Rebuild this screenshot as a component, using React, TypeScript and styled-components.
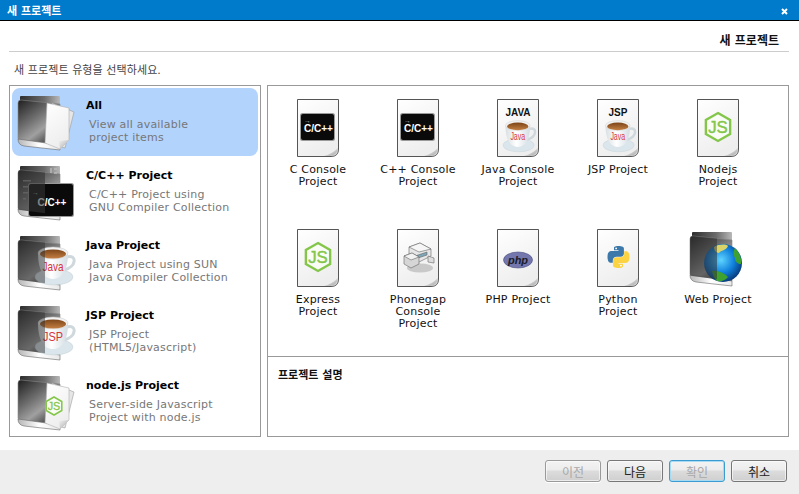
import React from 'react';
import styled, { createGlobalStyle } from 'styled-components';

const GlobalStyle = createGlobalStyle`
  html, body {
    margin: 0;
    padding: 0;
    background: #fff;
    font-family: 'DejaVu Sans', 'Noto Sans CJK KR', sans-serif;
    font-size: 11px;
  }
`;

const Dialog = styled.div`
  width: 799px;
  height: 494px;
  display: flex;
  flex-direction: column;
  overflow: hidden;
  background: #fff;
`;

const TitleBar = styled.div`
  height: 19px;
  flex: none;
  display: flex;
  align-items: center;
  justify-content: space-between;
  padding: 0 11px 1px 7px;
  background: #007acb;
  border-bottom: 1px solid #000;
  color: #fff;
  font-weight: bold;
  font-size: 11px;
`;

const CloseMark = styled.svg`
  width: 7px;
  height: 7px;
  margin-top: 3px;
`;

const Header = styled.div`
  height: 24px;
  flex: none;
  margin: 0 10px 0 9px;
  padding: 6px 10px 0 0;
  display: flex;
  align-items: center;
  justify-content: flex-end;
  border-bottom: 1px solid #cccccc;
  color: #111;
  font-size: 12px;
  font-weight: bold;
  box-sizing: content-box;
`;

const Hint = styled.div`
  height: 33px;
  flex: none;
  padding: 0 0 0 14px;
  display: flex;
  align-items: center;
  color: #444;
  font-size: 11px;
  letter-spacing: 0.08px;
`;

const Body = styled.div`
  display: flex;
  gap: 6px;
  height: 352px;
  flex: none;
  margin: 0 10px 0 9px;
`;

const TypeList = styled.div`
  width: 252px;
  flex: none;
  box-sizing: border-box;
  border: 1px solid #999;
  padding: 2px;
  display: flex;
  flex-direction: column;
  gap: 2px;
`;

const TypeRow = styled.div<{ $selected?: boolean }>`
  height: 68px;
  flex: none;
  display: flex;
  padding: 5px 0 0 4px;
  box-sizing: border-box;
  border-radius: 8px;
  background: ${(p) => (p.$selected ? '#b2d3fc' : 'transparent')};
`;

const TypeText = styled.div`
  margin-left: 10px;
  padding-top: 6px;
`;

const TypeTitle = styled.div`
  font-weight: bold;
  color: #000;
  line-height: 14px;
  height: 14px;
`;

const TypeDesc = styled.div`
  margin: 5px 0 0 3px;
  color: #777;
  line-height: 13px;
  letter-spacing: 0.2px;
  white-space: pre-line;
`;

const RightColumn = styled.div`
  flex: 1;
  box-sizing: border-box;
  border: 1px solid #999;
  display: flex;
  flex-direction: column;
`;

const TemplateGrid = styled.div`
  height: 271px;
  flex: none;
  box-sizing: border-box;
  border-bottom: 1px solid #999;
  padding-top: 13px;
  display: grid;
  grid-template-columns: repeat(5, 100px);
  grid-auto-rows: 130px;
`;

const TemplateCell = styled.div`
  display: flex;
  flex-direction: column;
  align-items: center;
`;

const TemplateIcon = styled.div`
  height: 58px;
  margin-bottom: 7px;
  display: flex;
  justify-content: center;
`;

const TemplateLabel = styled.div`
  text-align: center;
  line-height: 12px;
  color: #111;
  letter-spacing: 0.2px;
  white-space: pre-line;
`;

const Description = styled.div`
  padding: 12px 0 0 10px;
  font-weight: bold;
  color: #111;
  line-height: 14px;
`;

const Footer = styled.div`
  margin-top: 13px;
  height: 44px;
  flex: none;
  background: #eeeeee;
  display: flex;
  justify-content: flex-end;
  gap: 6px;
  padding: 10px 12px 0 0;
  box-sizing: border-box;
`;

const Button = styled.button<{ $focused?: boolean }>`
  width: 56px;
  height: 22px;
  padding: 0;
  box-sizing: border-box;
  font-family: inherit;
  font-size: 12px;
  color: #222;
  border: 1px solid #777;
  border-radius: 3px;
  background: linear-gradient(#f3f3f3 0%, #ececec 45%, #dcdcdc 50%, #cfcfcf 100%);
  box-shadow: inset 0 0 0 1px rgba(255, 255, 255, 0.6);

  &:disabled {
    color: #a8a8a8;
    border-color: ${(p) => (p.$focused ? '#3c9bd0' : '#9a9a9a')};
    box-shadow: ${(p) =>
      p.$focused ? 'inset 0 0 0 1px #a5dcf3' : 'inset 0 0 0 1px rgba(255,255,255,.6), 0 1px 0 #fff'};
  }
`;

const HiddenDefs = styled.svg`
  position: absolute;
  width: 0;
  height: 0;
`;

const iconFont = "'Liberation Sans', sans-serif";

const SharedDefs = () => (
  <HiddenDefs aria-hidden="true">
    <defs>
      <linearGradient id="folderBack" x1="0" y1="0" x2="1" y2="0">
        <stop offset="0" stopColor="#2e2e2e" />
        <stop offset="0.6" stopColor="#6a6a6a" />
        <stop offset="1" stopColor="#b8b8b8" />
      </linearGradient>
      <linearGradient id="folderFront" x1="0" y1="0" x2="0.7" y2="1">
        <stop offset="0" stopColor="#1e1e1e" />
        <stop offset="0.45" stopColor="#6f6f6f" />
        <stop offset="0.7" stopColor="#a0a0a0" />
        <stop offset="1" stopColor="#3a3a3a" />
      </linearGradient>
      <linearGradient id="folderLip" x1="0" y1="0" x2="1" y2="0">
        <stop offset="0" stopColor="#b5b5b5" />
        <stop offset="0.5" stopColor="#ffffff" />
        <stop offset="1" stopColor="#e8e8e8" />
      </linearGradient>
      <linearGradient id="pageFill" x1="0" y1="0" x2="0.4" y2="1">
        <stop offset="0" stopColor="#ffffff" />
        <stop offset="1" stopColor="#eeeeee" />
      </linearGradient>
      <linearGradient id="pageFold" x1="0" y1="0" x2="1" y2="1">
        <stop offset="0" stopColor="#f2f2f2" />
        <stop offset="1" stopColor="#a8a8a8" />
      </linearGradient>
      <linearGradient id="cupBody" x1="0" y1="0" x2="1" y2="0">
        <stop offset="0" stopColor="#d9dfe2" />
        <stop offset="0.45" stopColor="#ffffff" />
        <stop offset="1" stopColor="#d3dde3" />
      </linearGradient>
      <linearGradient id="coffee" x1="0" y1="0" x2="0" y2="1">
        <stop offset="0" stopColor="#7c4519" />
        <stop offset="1" stopColor="#c47f43" />
      </linearGradient>
      <radialGradient id="globe" cx="0.45" cy="0.42" r="0.62">
        <stop offset="0" stopColor="#5fd4ff" />
        <stop offset="0.55" stopColor="#0f80dc" />
        <stop offset="1" stopColor="#07316f" />
      </radialGradient>
      <clipPath id="folderLeft">
        <rect x="0" y="0" width="29" height="60" />
      </clipPath>
    </defs>
  </HiddenDefs>
);

const FRONT = 'M2 10 Q2 7 5 7 L44 11 V52 L4 47 Q2 47 2 45 Z';

const FolderBase = () => (
  <>
    <rect x="4" y="3" width="40" height="12" rx="1" fill="url(#folderBack)" />
    <path d={FRONT} fill="url(#folderFront)" stroke="#888" strokeWidth="0.6" />
    <path d="M2 46 L44 52 V57 L8 53 Q2 52 2 46 Z" fill="url(#folderLip)" stroke="#666" strokeWidth="0.6" />
  </>
);

// the left part of the folder lies over whatever sits in it
const FolderVeil = ({ opacity = 0.6 }: { opacity?: number }) => (
  <path d={FRONT} fill="#333" opacity={opacity} clipPath="url(#folderLeft)" />
);

const Terminal = ({ x, y, w, h }: { x: number; y: number; w: number; h: number }) => (
  <g>
    <rect x={x - 1} y={y - 1} width={w + 2} height={h + 2} rx="2.5" fill="#9a9a9a" />
    <rect x={x} y={y} width={w} height={h} rx="2" fill="#0a0a0a" />
    <text x={x + 3} y={y + h * 0.34} fill="#bbb" fontSize="7" fontFamily={iconFont}>
      →
    </text>
    <text
      x={x + w / 2 + 1}
      y={y + h * 0.68}
      fill="#fff"
      fontSize="10"
      fontWeight="bold"
      textAnchor="middle"
      fontFamily={iconFont}
    >
      C/C++
    </text>
  </g>
);

const Cup = ({ label, transform, textWidth }: { label: string; transform: string; textWidth: number }) => (
  <g transform={transform}>
    <ellipse cx="19" cy="32" rx="19" ry="8" fill="#dbe6ec" stroke="#c4d0d6" strokeWidth="0.5" />
    <path d="M32 12 C42 9 42 22 29 25" fill="none" stroke="#cfd8dd" strokeWidth="3" />
    <path d="M3 8 C3 24 8 34 18 34 C28 34 33 24 33 8 Z" fill="url(#cupBody)" />
    <ellipse cx="18" cy="8" rx="15" ry="6" fill="#f2f2f2" stroke="#c9c9c9" strokeWidth="0.5" />
    <ellipse cx="18" cy="9" rx="13" ry="4.6" fill="url(#coffee)" />
    <text
      x="18"
      y="26"
      fill="#d4343c"
      fontSize="13"
      textAnchor="middle"
      textLength={textWidth}
      lengthAdjust="spacingAndGlyphs"
      fontFamily={iconFont}
    >
      {label}
    </text>
  </g>
);

const JsHex = ({ cx, cy, r }: { cx: number; cy: number; r: number }) => {
  const pts = [0, 60, 120, 180, 240, 300]
    .map((a) => {
      const t = ((a - 90) * Math.PI) / 180;
      return `${cx + r * Math.cos(t)},${cy + r * Math.sin(t)}`;
    })
    .join(' ');
  return (
    <g>
      <polygon points={pts} fill="#fafdf6" stroke="#84c64a" strokeWidth={r * 0.17} />
      <text
        x={cx}
        y={cy + r * 0.42}
        fill="#84c64a"
        stroke="#84c64a"
        strokeWidth={r * 0.03}
        fontSize={r * 1.2}
        textAnchor="middle"
        fontFamily={iconFont}
      >
        JS
      </text>
    </g>
  );
};

const Sheets = () => (
  <g>
    <path d="M36 10 L58 19 L49 55 L30 50 Z" fill="#e6e6e6" stroke="#9a9a9a" strokeWidth="0.6" />
    <path d="M31 10 L53 15 L53 47 L44 56 L29 50 Z" fill="url(#pageFill)" stroke="#b0b0b0" strokeWidth="0.6" />
    <path d="M53 47 L44 56 L43 48 Z" fill="url(#pageFold)" />
  </g>
);

const Globe = () => (
  <g>
    <circle cx="35" cy="34" r="19" fill="url(#globe)" />
    <path d="M26 18 C31 15 38 15 40 17 C38 22 33 21 31 24 C28 24 26 21 26 18 Z" fill="#d9d36a" />
    <path d="M47 19 C51 23 54 29 53 35 C50 35 47 33 47 29 C45 26 45 22 47 19 Z" fill="#3fa12f" />
    <path d="M24 42 C29 41 36 44 40 48 C37 52 32 53 29 52 C26 49 25 46 24 42 Z" fill="#3fa12f" />
  </g>
);

type ListKind = 'all' | 'c' | 'java' | 'jsp' | 'node';

const ListIcon = ({ kind }: { kind: ListKind }) => (
  <svg width="60" height="60" viewBox="0 0 60 60">
    <FolderBase />
    {kind === 'all' && <Sheets />}
    {kind === 'c' && (
      <>
        <g fill="#bbb" opacity="0.7">
          <rect x="34" y="5" width="2" height="5" />
          <rect x="38" y="5" width="3" height="2" />
          <rect x="38" y="9" width="3" height="2" />
          <rect x="7" y="17" width="8" height="1.5" />
          <rect x="7" y="23" width="12" height="1.5" />
          <rect x="7" y="29" width="6" height="1.5" />
          <rect x="7" y="35" width="3" height="1.5" />
        </g>
        <Terminal x={13} y={21} w={44} h={32} />
        <FolderVeil />
      </>
    )}
    {kind === 'java' && (
      <>
        <Cup label="Java" textWidth={21} transform="translate(19 12)" />
        <FolderVeil opacity={0.5} />
      </>
    )}
    {kind === 'jsp' && (
      <>
        <Cup label="JSP" textWidth={20} transform="translate(19 12)" />
        <FolderVeil opacity={0.5} />
      </>
    )}
    {kind === 'node' && (
      <>
        <Sheets />
        <JsHex cx={38} cy={33} r={9} />
      </>
    )}
  </svg>
);

type TemplateKind = 'console' | 'java' | 'jsp' | 'node' | 'phonegap' | 'php' | 'python';

const Phonegap = () => (
  <g stroke="#666" strokeWidth="0.6">
    <ellipse cx="23" cy="39" rx="13" ry="4.5" fill="#c9c9c9" stroke="none" />
    <path d="M12 18 L23 14 L34 20 L34 27 L22 33 L12 27 Z" fill="#e6e6e6" />
    <path d="M12 18 L22 23 L34 20 L23 14 Z" fill="#f6f6f6" />
    <path d="M18 27 L30 23 L30 26 L18 30 Z" fill="#7fa6b8" />
    <path d="M7 27 L15 24 L22 28 L22 35 L14 39 L7 35 Z" fill="#d6d6d6" />
    <path d="M7 27 L14 31 L22 28 L15 24 Z" fill="#f2f2f2" />
    <path d="M31 27 L37 29 L37 34 L31 33 Z" fill="#ddd" />
  </g>
);

const PYTHON_HALF =
  'M11.9 1 C7 1 7.5 3 7.5 3 V5.3 H12 V6 H5 C3 6 1 7.3 1 11.9 C1 16.5 2.8 17.7 4.6 17.7 H6.3 V15.3 C6.3 13.3 8 11.7 10 11.7 H14.3 C16 11.7 17.4 10.3 17.4 8.6 V3.5 C17.4 2 16 1 11.9 1 Z';

const Python = () => (
  <g transform="translate(9.5 16)">
    <path d={PYTHON_HALF} fill="#3c78aa" />
    <g transform="rotate(180 12 12)">
      <path d={PYTHON_HALF} fill="#fcd343" />
    </g>
    <circle cx="9.6" cy="3.4" r="0.9" fill="#fff" />
    <circle cx="14.4" cy="20.6" r="0.9" fill="#fff" />
  </g>
);

const DocIcon = ({ kind }: { kind: TemplateKind }) => (
  <svg width="42" height="58" viewBox="0 0 42 58">
    <path
      d="M0.5 0.5 H41.5 V50 Q41.5 57.5 34 57.5 H0.5 Z"
      fill="url(#pageFill)"
      stroke="#555"
      strokeWidth="1"
    />
    <path d="M41 49 Q40 57 33 57 L27 57 Q35 55 41 49 Z" fill="url(#pageFold)" />
    {kind === 'console' && <Terminal x={4} y={15} w={33} h={26} />}
    {kind === 'java' && (
      <>
        <text x="21" y="17" fontSize="10" fontWeight="bold" textAnchor="middle" fill="#111" fontFamily={iconFont}>
          JAVA
        </text>
        <Cup label="Java" textWidth={18} transform="translate(6 20) scale(0.82)" />
      </>
    )}
    {kind === 'jsp' && (
      <>
        <text x="21" y="17" fontSize="10" fontWeight="bold" textAnchor="middle" fill="#111" fontFamily={iconFont}>
          JSP
        </text>
        <Cup label="Java" textWidth={18} transform="translate(6 20) scale(0.82)" />
      </>
    )}
    {kind === 'node' && <JsHex cx={21} cy={28} r={14} />}
    {kind === 'phonegap' && <Phonegap />}
    {kind === 'php' && (
      <g>
        <ellipse cx="21" cy="31" rx="14.5" ry="8" fill="#7377ad" stroke="#4c4f80" strokeWidth="0.6" />
        <text
          x="21"
          y="34.5"
          fontSize="11"
          fontStyle="italic"
          fontWeight="bold"
          textAnchor="middle"
          fill="#1c1c28"
          fontFamily={iconFont}
        >
          php
        </text>
      </g>
    )}
    {kind === 'python' && <Python />}
  </svg>
);

const WebIcon = () => (
  <svg width="60" height="60" viewBox="0 0 60 60">
    <FolderBase />
    <Globe />
    <FolderVeil opacity={0.55} />
  </svg>
);

const projectTypes: { kind: ListKind; title: string; desc: string }[] = [
  { kind: 'all', title: 'All', desc: 'View all available\nproject items' },
  { kind: 'c', title: 'C/C++ Project', desc: 'C/C++ Project using\nGNU Compiler Collection' },
  { kind: 'java', title: 'Java Project', desc: 'Java Project using SUN\nJava Compiler Collection' },
  { kind: 'jsp', title: 'JSP Project', desc: 'JSP Project\n(HTML5/Javascript)' },
  { kind: 'node', title: 'node.js Project', desc: 'Server-side Javascript\nProject with node.js' },
];

const templates: { kind: TemplateKind | 'web'; label: string }[] = [
  { kind: 'console', label: 'C Console\nProject' },
  { kind: 'console', label: 'C++ Console\nProject' },
  { kind: 'java', label: 'Java Console\nProject' },
  { kind: 'jsp', label: 'JSP Project' },
  { kind: 'node', label: 'Nodejs\nProject' },
  { kind: 'node', label: 'Express\nProject' },
  { kind: 'phonegap', label: 'Phonegap\nConsole\nProject' },
  { kind: 'php', label: 'PHP Project' },
  { kind: 'python', label: 'Python\nProject' },
  { kind: 'web', label: 'Web Project' },
];

export default function App() {
  return (
    <Dialog>
      <GlobalStyle />
      <SharedDefs />
      <TitleBar>
        <span>새 프로젝트</span>
        <CloseMark viewBox="0 0 7 7">
          <path d="M1 1 L6 6 M6 1 L1 6" stroke="#fff" strokeWidth="2" />
        </CloseMark>
      </TitleBar>
      <Header>새 프로젝트</Header>
      <Hint>새 프로젝트 유형을 선택하세요.</Hint>
      <Body>
        <TypeList>
          {projectTypes.map((t, i) => (
            <TypeRow key={t.title} $selected={i === 0}>
              <ListIcon kind={t.kind} />
              <TypeText>
                <TypeTitle>{t.title}</TypeTitle>
                <TypeDesc>{t.desc}</TypeDesc>
              </TypeText>
            </TypeRow>
          ))}
        </TypeList>
        <RightColumn>
          <TemplateGrid>
            {templates.map((t) => (
              <TemplateCell key={t.label}>
                <TemplateIcon>{t.kind === 'web' ? <WebIcon /> : <DocIcon kind={t.kind} />}</TemplateIcon>
                <TemplateLabel>{t.label}</TemplateLabel>
              </TemplateCell>
            ))}
          </TemplateGrid>
          <Description>프로젝트 설명</Description>
        </RightColumn>
      </Body>
      <Footer>
        <Button disabled>이전</Button>
        <Button>다음</Button>
        <Button disabled $focused>
          확인
        </Button>
        <Button>취소</Button>
      </Footer>
    </Dialog>
  );
}
